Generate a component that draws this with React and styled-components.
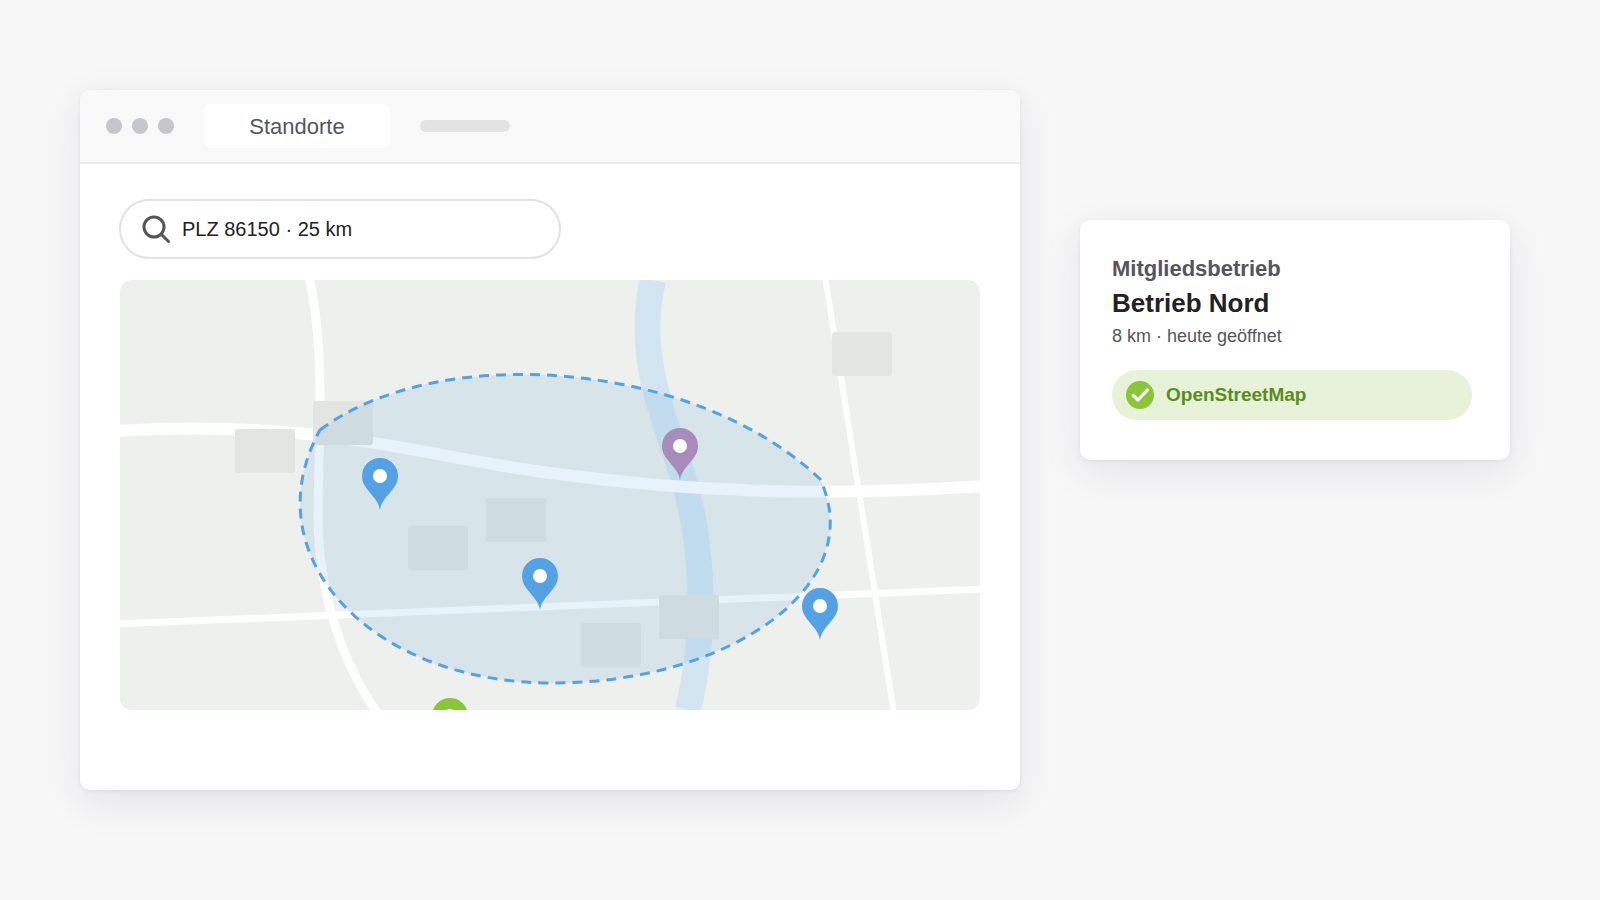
import React from "react";
import styled, { createGlobalStyle } from "styled-components";

const GlobalStyle = createGlobalStyle`
  * {
    box-sizing: border-box;
  }
  body {
    margin: 0;
    background: #f7f7f8;
    color: #222224;
    font-family: "Liberation Sans", Arial, sans-serif;
  }
`;

const Page = styled.main`
  display: grid;
  grid-template-columns: minmax(0, 94fr) minmax(0, 43fr);
  align-items: start;
  gap: 60px;
  padding: 90px 90px 90px 80px;
`;

const Panel = styled.section`
  background: #ffffff;
  border-radius: 10px;
  box-shadow: 0 12px 40px rgba(40, 20, 40, 0.09), 0 1px 4px rgba(0, 0, 0, 0.07);
`;

const TitleBar = styled.header`
  display: flex;
  align-items: center;
  gap: 30px;
  height: 74px;
  padding: 0 26px;
  background: #f9f9f9;
  border-bottom: 2px solid #ececed;
  border-radius: 10px 10px 0 0;
`;

const Dots = styled.div`
  display: flex;
  gap: 10px;
`;

const Dot = styled.span`
  width: 16px;
  height: 16px;
  border-radius: 50%;
  background: #c6c7ca;
`;

const Tab = styled.button`
  width: 186px;
  height: 44px;
  padding: 2px 0 0;
  border: 0;
  border-radius: 6px;
  background: #ffffff;
  color: #55565a;
  font-family: inherit;
  font-size: 22px;
`;

const EmptyTab = styled.span`
  width: 90px;
  height: 12px;
  border-radius: 6px;
  background: #e3e3e4;
`;

const Content = styled.div`
  padding: 36px 40px 80px;
`;

const SearchBox = styled.label`
  display: flex;
  align-items: center;
  gap: 10px;
  max-width: 440px;
  height: 58px;
  margin-bottom: 22px;
  padding: 0 20px;
  border-radius: 29px;
  outline: 2px solid #e2e2e3;
  outline-offset: -1px;

  svg {
    flex: none;
  }
`;

const SearchInput = styled.input`
  flex: 1;
  min-width: 0;
  padding: 0;
  border: 0;
  outline: 0;
  background: transparent;
  color: #222224;
  font-family: inherit;
  font-size: 20px;
`;

const MapView = styled.svg`
  display: block;
  width: 100%;
  height: auto;
  border-radius: 12px;
  background: #edf0ec;
`;

const Card = styled(Panel)`
  margin-top: 130px;
  padding: 36px 38px 40px 32px;
`;

const Kind = styled.p`
  margin: 0;
  color: #55565a;
  font-size: 22px;
  font-weight: 700;
  line-height: 26px;
`;

const Name = styled.h2`
  margin: 4px 0;
  font-size: 26px;
  line-height: 34px;
`;

const Meta = styled.p`
  margin: 0 0 22px;
  color: #55565a;
  font-size: 18px;
  line-height: 24px;
`;

const Badge = styled.div`
  display: flex;
  align-items: center;
  gap: 12px;
  height: 50px;
  padding: 0 14px;
  border-radius: 25px;
  background: #e7f2d8;
  color: #5b8c1f;
  font-size: 19px;
  font-weight: 700;
`;

const buildings = [
  [115, 149],
  [193, 121],
  [288, 246],
  [366, 218],
  [461, 343],
  [539, 315],
  [712, 52],
];

const pins = [
  { x: 260, y: 196, color: "#54a2e4" },
  { x: 420, y: 296, color: "#54a2e4" },
  { x: 560, y: 166, color: "#a88bba" },
  { x: 700, y: 326, color: "#54a2e4" },
  { x: 330, y: 436, color: "#8bc53a" },
];

const SearchIcon = () => (
  <svg width="32" height="32" viewBox="0 0 32 32" fill="none" stroke="#55565a">
    <circle cx="14" cy="14" r="10" strokeWidth="3" />
    <path d="M21.5 21.5L28.5 28.5" strokeWidth="3" strokeLinecap="round" />
  </svg>
);

const CheckIcon = () => (
  <svg width="28" height="28" viewBox="0 0 28 28" fill="none">
    <circle cx="14" cy="14" r="14" fill="#8bc53a" />
    <path
      d="M7.2 14.4L12 19L21.4 9"
      stroke="#ffffff"
      strokeWidth="3.2"
      strokeLinecap="round"
      strokeLinejoin="round"
    />
  </svg>
);

const Pin = ({ x, y, color }) => (
  <g transform={`translate(${x} ${y})`}>
    <path
      d="M0 34C-2 20 -18 14 -18 0A18 18 0 0 1 18 0C18 14 2 20 0 34Z"
      fill={color}
    />
    <circle r="7" fill="#ffffff" />
  </g>
);

const LocationMap = () => (
  <MapView viewBox="0 0 860 430" role="img">
    <path
      d="M533 0C515 75 545 140 561 190C580 250 590 340 568 430"
      fill="none"
      stroke="#d3e5f1"
      strokeWidth="26"
    />
    <g fill="none" stroke="#ffffff">
      <path
        d="M-4 151C200 139 290 174 430 193C570 212 700 217 864 206"
        strokeWidth="12"
      />
      <path
        d="M189 -4C200 50 200 90 200 130C200 170 198 200 198 240C199 310 220 380 258 434"
        strokeWidth="9"
      />
      <path d="M-4 344L864 309" strokeWidth="7" />
      <path d="M705 -4L774 434" strokeWidth="6" />
    </g>
    {buildings.map(([x, y]) => (
      <rect
        key={`${x}-${y}`}
        x={x}
        y={y}
        width="60"
        height="44"
        rx="3"
        fill="#e2e5e0"
      />
    ))}
    <path
      d="M200 150C318 61 575 80 700 199C750 305 610 403 432 403C250 403 131 275 200 150Z"
      fill="#54a2e4"
      fillOpacity="0.14"
      stroke="#54a2e4"
      strokeWidth="3"
      strokeDasharray="10 7"
    />
    {pins.map((pin) => (
      <Pin key={`${pin.x}-${pin.y}`} {...pin} />
    ))}
  </MapView>
);

const App = () => {
  return (
    <>
      <GlobalStyle />
      <Page>
        <Panel>
          <TitleBar>
            <Dots>
              <Dot />
              <Dot />
              <Dot />
            </Dots>
            <Tab type="button">Standorte</Tab>
            <EmptyTab />
          </TitleBar>
          <Content>
            <SearchBox htmlFor="search">
              <SearchIcon />
              <SearchInput
                id="search"
                type="text"
                defaultValue="PLZ 86150 · 25 km"
              />
            </SearchBox>
            <LocationMap />
          </Content>
        </Panel>
        <Card>
          <Kind>Mitgliedsbetrieb</Kind>
          <Name>Betrieb Nord</Name>
          <Meta>8 km · heute geöffnet</Meta>
          <Badge>
            <CheckIcon />
            OpenStreetMap
          </Badge>
        </Card>
      </Page>
    </>
  );
};

export default App;
